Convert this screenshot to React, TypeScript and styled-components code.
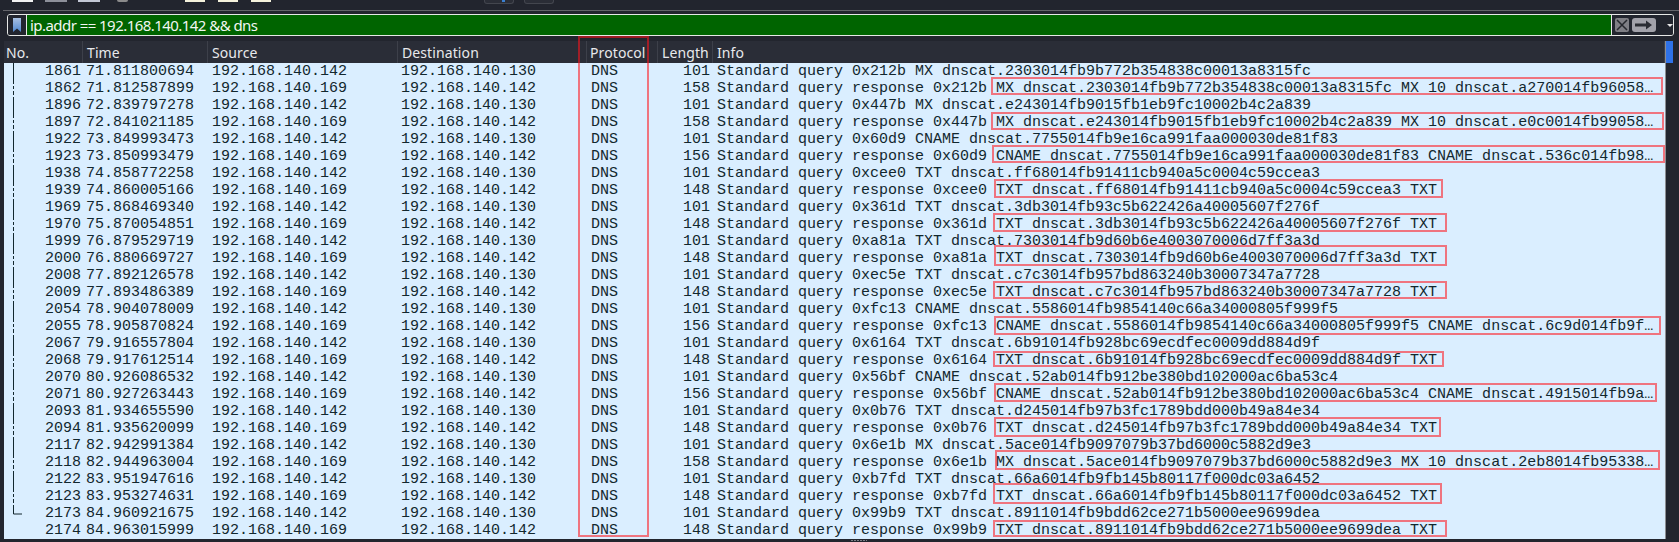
import React from "react";
import styled, { createGlobalStyle } from "styled-components";

const Global = createGlobalStyle`
  html, body { margin: 0; padding: 0; background: #22252e; overflow: hidden; }
`;

const Page = styled.div`
  position: relative;
  width: 1679px;
  height: 542px;
  background: #22252e;
  overflow: hidden;
`;

const Toolbar = styled.div`
  display: flex;
  align-items: flex-start;
  height: 10px;
  padding-left: 12px;
  box-sizing: border-box;
`;

const ToolStub = styled.div<{ $w: number; $h: number; $c: string; $ml: number; $round?: boolean }>`
  width: ${(p) => p.$w}px;
  height: ${(p) => p.$h}px;
  margin-left: ${(p) => p.$ml}px;
  background: ${(p) => p.$c};
  border-radius: ${(p) => (p.$round ? "0 0 6px 6px" : "0")};
`;

const ToolButton = styled.div<{ $ml: number }>`
  position: relative;
  width: 30px;
  height: 4px;
  margin-left: ${(p) => p.$ml}px;
  box-sizing: border-box;
  border: 1px solid #43464e;
  border-top: none;
  border-radius: 0 0 3px 3px;
  background: #2a2d36;
`;

const BlueDot = styled.span`
  position: absolute;
  left: 17px;
  top: 0;
  width: 3px;
  height: 2px;
  background: #3a7fd0;
`;

const Rule = styled.div`
  height: 1px;
  margin: 0 0 0 3px;
  background: #64656b;
`;

const FilterBar = styled.div`
  display: flex;
  align-items: stretch;
  height: 22px;
  margin: 3px 5px 0 7px;
  box-sizing: border-box;
  border: 1px solid #e6e8e6;
  border-radius: 3px;
  overflow: hidden;
`;

const BookmarkSlot = styled.div`
  width: 18px;
  flex: none;
  display: flex;
  align-items: center;
  justify-content: center;
  background: #22252e;
  border-right: 1px solid #e6e8e6;
  box-sizing: content-box;
`;

const FilterInput = styled.div`
  flex: 1;
  padding-left: 3px;
  background: #006400;
  color: #f2f6f2;
  font: 15px/20px "Noto Sans", sans-serif;
  letter-spacing: -0.55px;
  white-space: nowrap;
`;

const FilterActions = styled.div`
  width: 62px;
  flex: none;
  display: flex;
  align-items: center;
  gap: 3px;
  padding-left: 3px;
  box-sizing: border-box;
  background: #22252e;
  border-left: 1px solid #e6e8e6;
`;

const ClearButton = styled.div`
  width: 14px;
  height: 14px;
  display: flex;
  align-items: center;
  justify-content: center;
  background: #7f7f85;
  border-radius: 2px;
`;

const ApplyButton = styled.div`
  width: 24px;
  height: 14px;
  display: flex;
  align-items: center;
  justify-content: center;
  background: #a2a2aa;
  border-radius: 3px;
`;

const Caret = styled.div`
  width: 0;
  height: 0;
  margin-left: 8px;
  border-left: 3px solid transparent;
  border-right: 3px solid transparent;
  border-top: 3px solid #e8e8e8;
`;

const ListArea = styled.div`
  display: flex;
  margin: 5px 6px 0 4px;
`;

const Table = styled.div`
  flex: 1;
  min-width: 0;
  display: flex;
  flex-direction: column;
`;

const COLS = "79px 125px 190px 189px 71px 55px 1fr";

const HeaderRow = styled.div`
  display: grid;
  grid-template-columns: ${COLS};
  height: 22px;
  background: #2a2d37;
`;

const HeaderCell = styled.div<{ $pad: number }>`
  padding-left: ${(p) => p.$pad}px;
  border-right: 1px solid #3d404a;
  color: #e8e9ec;
  font: 14px/24px "Noto Sans", sans-serif;
  letter-spacing: 0.1px;
  white-space: nowrap;
  overflow: hidden;
`;

const Row = styled.div`
  display: grid;
  grid-template-columns: ${COLS};
  height: 17px;
  background: #daeeff;
  color: #12272e;
  font: 15px/17px "Liberation Mono", monospace;
  white-space: pre;
`;

const NoCell = styled.div`
  position: relative;
  text-align: right;
  padding-right: 2px;
`;

const ThreadSvg = styled.svg`
  position: absolute;
  left: 0;
  top: 0;
`;

const Cell = styled.div<{ $pad?: number }>`
  padding-left: ${(p) => p.$pad ?? 4}px;
  overflow: hidden;
`;

const LengthCell = styled.div`
  text-align: right;
  padding-right: 3px;
`;

const Scrollbar = styled.div`
  width: 7px;
  flex: none;
  background: #22252e;
  border-left: 1px solid #8b8d92;
  box-sizing: content-box;
`;

const ScrollThumb = styled.div`
  height: 22px;
  background: #2f72e8;
`;

const Mark = styled.div<{ $l: number; $t: number; $r: number; $b: number }>`
  position: absolute;
  left: ${(p) => p.$l}px;
  top: ${(p) => p.$t}px;
  width: ${(p) => p.$r - p.$l}px;
  height: ${(p) => p.$b - p.$t}px;
  box-sizing: border-box;
  border: 2px solid rgba(255, 20, 27, 0.56);
  pointer-events: none;
`;

const Grip = styled.div`
  position: absolute;
  left: 851px;
  top: 540px;
  width: 16px;
  height: 1px;
  background: repeating-linear-gradient(90deg, #7c7f86 0 2px, transparent 2px 3px);
`;

const A = "192.168.140.142";
const B = "192.168.140.130";
const C = "192.168.140.169";

type Pkt = [string, string, string, string, string];

const q = (no: string, t: string, info: string): Pkt => [no, t, "q", "101", "Standard query " + info];
const r = (no: string, t: string, len: string, info: string): Pkt => [no, t, "r", len, "Standard query response " + info];

const packets: Pkt[] = [
  q("1861", "71.811800694", "0x212b MX dnscat.2303014fb9b772b354838c00013a8315fc"),
  r("1862", "71.812587899", "158", "0x212b MX dnscat.2303014fb9b772b354838c00013a8315fc MX 10 dnscat.a270014fb96058…"),
  q("1896", "72.839797278", "0x447b MX dnscat.e243014fb9015fb1eb9fc10002b4c2a839"),
  r("1897", "72.841021185", "158", "0x447b MX dnscat.e243014fb9015fb1eb9fc10002b4c2a839 MX 10 dnscat.e0c0014fb99058…"),
  q("1922", "73.849993473", "0x60d9 CNAME dnscat.7755014fb9e16ca991faa000030de81f83"),
  r("1923", "73.850993479", "156", "0x60d9 CNAME dnscat.7755014fb9e16ca991faa000030de81f83 CNAME dnscat.536c014fb98…"),
  q("1938", "74.858772258", "0xcee0 TXT dnscat.ff68014fb91411cb940a5c0004c59ccea3"),
  r("1939", "74.860005166", "148", "0xcee0 TXT dnscat.ff68014fb91411cb940a5c0004c59ccea3 TXT"),
  q("1969", "75.868469340", "0x361d TXT dnscat.3db3014fb93c5b622426a40005607f276f"),
  r("1970", "75.870054851", "148", "0x361d TXT dnscat.3db3014fb93c5b622426a40005607f276f TXT"),
  q("1999", "76.879529719", "0xa81a TXT dnscat.7303014fb9d60b6e4003070006d7ff3a3d"),
  r("2000", "76.880669727", "148", "0xa81a TXT dnscat.7303014fb9d60b6e4003070006d7ff3a3d TXT"),
  q("2008", "77.892126578", "0xec5e TXT dnscat.c7c3014fb957bd863240b30007347a7728"),
  r("2009", "77.893486389", "148", "0xec5e TXT dnscat.c7c3014fb957bd863240b30007347a7728 TXT"),
  q("2054", "78.904078009", "0xfc13 CNAME dnscat.5586014fb9854140c66a34000805f999f5"),
  r("2055", "78.905870824", "156", "0xfc13 CNAME dnscat.5586014fb9854140c66a34000805f999f5 CNAME dnscat.6c9d014fb9f…"),
  q("2067", "79.916557804", "0x6164 TXT dnscat.6b91014fb928bc69ecdfec0009dd884d9f"),
  r("2068", "79.917612514", "148", "0x6164 TXT dnscat.6b91014fb928bc69ecdfec0009dd884d9f TXT"),
  q("2070", "80.926086532", "0x56bf CNAME dnscat.52ab014fb912be380bd102000ac6ba53c4"),
  r("2071", "80.927263443", "156", "0x56bf CNAME dnscat.52ab014fb912be380bd102000ac6ba53c4 CNAME dnscat.4915014fb9a…"),
  q("2093", "81.934655590", "0x0b76 TXT dnscat.d245014fb97b3fc1789bdd000b49a84e34"),
  r("2094", "81.935620099", "148", "0x0b76 TXT dnscat.d245014fb97b3fc1789bdd000b49a84e34 TXT"),
  q("2117", "82.942991384", "0x6e1b MX dnscat.5ace014fb9097079b37bd6000c5882d9e3"),
  r("2118", "82.944963004", "158", "0x6e1b MX dnscat.5ace014fb9097079b37bd6000c5882d9e3 MX 10 dnscat.2eb8014fb95338…"),
  q("2122", "83.951947616", "0xb7fd TXT dnscat.66a6014fb9fb145b80117f000dc03a6452"),
  r("2123", "83.953274631", "148", "0xb7fd TXT dnscat.66a6014fb9fb145b80117f000dc03a6452 TXT"),
  q("2173", "84.960921675", "0x99b9 TXT dnscat.8911014fb9bdd62ce271b5000ee9699dea"),
  r("2174", "84.963015999", "148", "0x99b9 TXT dnscat.8911014fb9bdd62ce271b5000ee9699dea TXT"),
];

const marks: [number, number, number, number][] = [
  [578, 36, 649, 537],
  [991, 77, 1663, 95],
  [991, 112, 1664, 130],
  [992, 145, 1665, 163],
  [994, 179, 1443, 198],
  [993, 213, 1447, 232],
  [994, 245, 1447, 266],
  [993, 281, 1447, 299],
  [994, 316, 1661, 335],
  [993, 351, 1444, 367],
  [994, 383, 1657, 402],
  [994, 417, 1441, 437],
  [995, 450, 1660, 470],
  [993, 483, 1442, 504],
  [993, 520, 1447, 537],
];

const headers: [string, number][] = [
  ["No.", 2],
  ["Time", 4],
  ["Source", 4],
  ["Destination", 4],
  ["Protocol", 3],
  ["Length", 4],
  ["Info", 4],
];

const Thread = ({ index, total }: { index: number; total: number }) => {
  if (index >= total - 1) return null;
  const isLast = index === total - 2;
  const dashed = index % 2 === 1;
  return (
    <ThreadSvg width="24" height="17" viewBox="0 0 24 17">
      {isLast ? (
        <path d="M9.5 0V9H18" fill="none" stroke="#12272e" strokeWidth="1" />
      ) : (
        <path d="M9.5 0V17" fill="none" stroke="#12272e" strokeWidth="1" strokeDasharray={dashed ? "4 2 3 2" : undefined} />
      )}
    </ThreadSvg>
  );
};

export default function App() {
  return (
    <Page>
      <Global />
      <Toolbar>
        <ToolStub $ml={0} $w={21} $h={2} $c="#f2f2f2" />
        <ToolStub $ml={12} $w={22} $h={2} $c="#8d909a" />
        <ToolStub $ml={11} $w={22} $h={2} $c="#c3c8d6" />
        <ToolStub $ml={17} $w={11} $h={2} $c="#8b8b8b" $round />
        <ToolStub $ml={57} $w={20} $h={2} $c="#f5f2dc" />
        <ToolStub $ml={13} $w={20} $h={2} $c="#f5f2dc" />
        <ToolStub $ml={13} $w={20} $h={2} $c="#f5f2dc" />
        <ToolButton $ml={213}>
          <BlueDot />
        </ToolButton>
        <ToolButton $ml={10} />
      </Toolbar>
      <Rule />
      <FilterBar>
        <BookmarkSlot>
          <svg width="8" height="14" viewBox="0 0 8 14">
            <defs>
              <linearGradient id="bm" x1="0" y1="0" x2="0" y2="1">
                <stop offset="0" stopColor="#a9c0e2" />
                <stop offset="1" stopColor="#4f88d0" />
              </linearGradient>
            </defs>
            <path d="M0 0H8V14L4 10.5L0 14Z" fill="url(#bm)" />
          </svg>
        </BookmarkSlot>
        <FilterInput>ip.addr == 192.168.140.142 &amp;&amp; dns</FilterInput>
        <FilterActions>
          <ClearButton>
            <svg width="12" height="12" viewBox="0 0 12 12">
              <path d="M1 1L11 11M11 1L1 11" stroke="#26282e" strokeWidth="1.5" fill="none" />
            </svg>
          </ClearButton>
          <ApplyButton>
            <svg width="18" height="10" viewBox="0 0 18 10">
              <path d="M0 3.5H11V0.5L17 5L11 9.5V6.5H0Z" fill="#2a2c33" />
            </svg>
          </ApplyButton>
          <Caret />
        </FilterActions>
      </FilterBar>
      <ListArea>
        <Table>
          <HeaderRow>
            {headers.map(([label, pad]) => (
              <HeaderCell key={label} $pad={pad}>
                {label}
              </HeaderCell>
            ))}
          </HeaderRow>
          {packets.map(([no, time, kind, len, info], i) => (
            <Row key={no}>
              <NoCell>
                <Thread index={i} total={packets.length} />
                {no}
              </NoCell>
              <Cell $pad={3}>{time}</Cell>
              <Cell>{kind === "q" ? A : C}</Cell>
              <Cell $pad={3}>{kind === "q" ? B : A}</Cell>
              <Cell>DNS</Cell>
              <LengthCell>{len}</LengthCell>
              <Cell>{info}</Cell>
            </Row>
          ))}
        </Table>
        <Scrollbar>
          <ScrollThumb />
        </Scrollbar>
      </ListArea>
      {marks.map(([l, t, rr, b]) => (
        <Mark key={t} $l={l} $t={t} $r={rr} $b={b} />
      ))}
      <Grip />
    </Page>
  );
}
